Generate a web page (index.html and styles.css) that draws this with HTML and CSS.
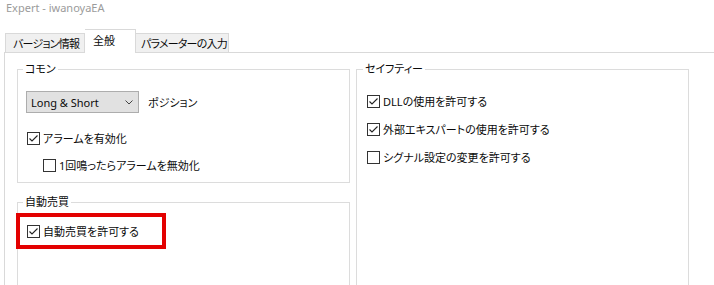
FILE: index.html
```html
<!DOCTYPE html>
<html lang="ja">
<head>
    <meta charset="UTF-8">
    <meta name="viewport" content="width=device-width, initial-scale=1.0">
    <title>Expert - iwanoyaEA</title>
    <link rel="stylesheet" href="styles.css">
</head>
<body>
    <div class="title">Expert - iwanoyaEA</div>

    <div class="tabs">
        <div class="tab tab-info">バージョン情報</div>
        <div class="tab tab-general tab-active">全般</div>
        <div class="tab tab-params">パラメーターの入力</div>
    </div>

    <div class="panel">
        <div class="columns">
            <div class="column">
                <fieldset class="group group-common">
                    <legend>コモン</legend>
                    <div class="combo-row">
                        <div class="combo">
                            <span>Long &amp; Short</span>
                            <svg class="chevron" width="8" height="5" viewBox="0 0 8 5"><polyline points="0.5,0.5 4,4 7.5,0.5" fill="none" stroke="#444" stroke-width="1"/></svg>
                        </div>
                        <span class="combo-label">ポジション</span>
                    </div>
                    <label class="check check-first">
                        <span class="box checked"><svg width="11" height="11" viewBox="0 0 11 11"><polyline points="1.5,5.5 4,8 9.5,2.5" fill="none" stroke="#222" stroke-width="1.1"/></svg></span>
                        アラームを有効化
                    </label>
                    <label class="check check-sub">
                        <span class="box"></span>
                        1回鳴ったらアラームを無効化
                    </label>
                </fieldset>

                <fieldset class="group group-auto">
                    <legend>自動売買</legend>
                    <div class="highlight">
                        <label class="check">
                            <span class="box checked"><svg width="11" height="11" viewBox="0 0 11 11"><polyline points="1.5,5.5 4,8 9.5,2.5" fill="none" stroke="#222" stroke-width="1.1"/></svg></span>
                            自動売買を許可する
                        </label>
                    </div>
                </fieldset>
            </div>

            <fieldset class="group group-safety">
                <legend>セイフティー</legend>
                <label class="check">
                    <span class="box checked"><svg width="11" height="11" viewBox="0 0 11 11"><polyline points="1.5,5.5 4,8 9.5,2.5" fill="none" stroke="#222" stroke-width="1.1"/></svg></span>
                    DLLの使用を許可する
                </label>
                <label class="check">
                    <span class="box checked"><svg width="11" height="11" viewBox="0 0 11 11"><polyline points="1.5,5.5 4,8 9.5,2.5" fill="none" stroke="#222" stroke-width="1.1"/></svg></span>
                    外部エキスパートの使用を許可する
                </label>
                <label class="check">
                    <span class="box"></span>
                    シグナル設定の変更を許可する
                </label>
            </fieldset>
        </div>
    </div>
</body>
</html>
```

FILE: styles.css
```css
body {
    margin: 0;
    overflow: hidden;
    background-color: #fff;
    color: #0a0a0a;
    font-family: "Noto Sans", "Noto Sans CJK JP", sans-serif;
    font-size: 11px;
    font-feature-settings: "palt";
}
.title {
    height: 29px;
    line-height: 15px;
    padding-left: 6px;
    color: #9b9b9b;
}
.tabs {
    display: flex;
    align-items: flex-start;
    height: 24px;
    margin-bottom: -1px;
    padding-left: 5px;
}
.tab {
    margin-top: 4px;
    height: 19px;
    line-height: 19px;
    padding-left: 7px;
    letter-spacing: -0.8px;
    background-color: #f0f0f0;
    border: 1px solid #d9d9d9;
    border-bottom: none;
    box-sizing: border-box;
    white-space: nowrap;
}
.tab-info {
    width: 80px;
}
.tab-general {
    width: 51px;
    letter-spacing: 0;
}
.tab-params {
    width: 93px;
    padding-left: 5px;
    border-left: none;
}
.tab-active {
    position: relative;
    z-index: 1;
    margin-top: 0;
    height: 24px;
    line-height: 22px;
    padding-left: 8px;
    background-color: #fff;
    border-left: none;
}
.panel {
    margin-left: 4px;
    height: 400px;
    border-top: 1px solid #d9d9d9;
    border-left: 1px solid #d9d9d9;
    padding: 8px 0 0 12px;
}
.columns {
    display: grid;
    grid-template-columns: 333px 333px;
    column-gap: 6px;
    height: 100%;
}
.column {
    display: flex;
    flex-direction: column;
}
.group {
    margin: 0;
    min-inline-size: 0;
    border: 1px solid #dcdcdc;
    padding: 0 9px;
}
.group legend {
    line-height: 16px;
    padding: 0 2px;
    margin-left: -4px;
}
.group-common {
    height: 122px;
    box-sizing: border-box;
    padding-top: 14px;
}
.group-auto {
    flex: 1;
    margin-top: 11px;
    padding-top: 3px;
}
.group-safety {
    padding: 16px 10px 0;
    display: flex;
    flex-direction: column;
    gap: 12px;
}
.combo-row {
    display: flex;
    align-items: center;
    gap: 9px;
}
.combo {
    display: flex;
    align-items: center;
    justify-content: space-between;
    width: 113px;
    height: 22px;
    box-sizing: border-box;
    margin-left: -1px;
    padding: 0 5px 0 4px;
    background-color: #e1e1e1;
    border: 1px solid #adadad;
}
.chevron {
    display: block;
}
.check {
    display: flex;
    align-items: center;
    gap: 3px;
    height: 16px;
    white-space: nowrap;
}
.check-first {
    margin-top: 17px;
}
.check-sub {
    margin-top: 11px;
    margin-left: 16px;
}
.box {
    display: flex;
    align-items: center;
    justify-content: center;
    width: 13px;
    height: 13px;
    box-sizing: border-box;
    border: 1px solid #333;
    background-color: #fff;
}
.highlight {
    width: 150px;
    height: 36px;
    box-sizing: border-box;
    margin-left: -11px;
    padding-left: 7px;
    display: flex;
    align-items: center;
    border: 4px solid #e30000;
}
```
